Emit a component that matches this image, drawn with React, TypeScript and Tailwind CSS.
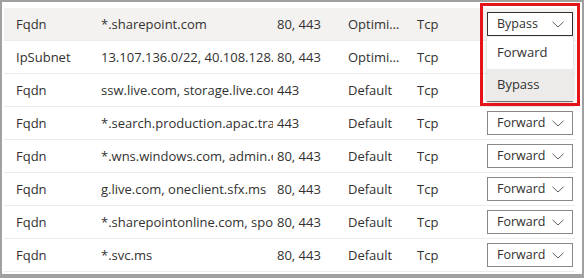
import React from "react";

const rows = [
  { type: "Fqdn", addr: "*.sharepoint.com", ports: "80, 443", cat: "Optimized", proto: "Tcp", action: "Bypass", hover: true, open: true },
  { type: "IpSubnet", addr: "13.107.136.0/22, 40.108.128.0/17, 52.104.0.0/14", ports: "80, 443", cat: "Optimized", proto: "Tcp", action: "Bypass" },
  { type: "Fqdn", addr: "ssw.live.com, storage.live.com", ports: "443", cat: "Default", proto: "Tcp", action: "Forward" },
  { type: "Fqdn", addr: "*.search.production.apac.trafficmanager.net", ports: "443", cat: "Default", proto: "Tcp", action: "Forward" },
  { type: "Fqdn", addr: "*.wns.windows.com, admin.onedrive.com", ports: "80, 443", cat: "Default", proto: "Tcp", action: "Forward" },
  { type: "Fqdn", addr: "g.live.com, oneclient.sfx.ms", ports: "80, 443", cat: "Default", proto: "Tcp", action: "Forward" },
  { type: "Fqdn", addr: "*.sharepointonline.com, spoprod-a.akamaihd.net", ports: "80, 443", cat: "Default", proto: "Tcp", action: "Forward" },
  { type: "Fqdn", addr: "*.svc.ms", ports: "80, 443", cat: "Default", proto: "Tcp", action: "Forward" },
];

function Chevron() {
  return (
    <svg width="12" height="7" viewBox="0 0 12 7" fill="none">
      <path d="M0.5 0.8 L6 6 L11.5 0.8" stroke="#605e5c" strokeWidth="1" />
    </svg>
  );
}

export default function App() {
  return (
    <div
      className="relative w-[584px] h-[278px] bg-[#a0a0a0] pt-[2px] pb-[4px] px-[2px]"
      style={{ fontFamily: '"Open Sans", "Noto Sans", sans-serif' }}
    >
      <div className="h-[272px] bg-white pt-[6px] pl-[2px] pr-[7px] text-[#323130] text-[13px]">
        {rows.map((r, i) => (
          <div
            key={i}
            className={`flex items-center h-[33px] border-b border-[#edebe9] ${r.hover ? "bg-[#f3f2f1]" : "bg-white"}`}
          >
            <div className="w-[97px] pl-[12px] pt-[2px]">{r.type}</div>
            <div className="w-[172px] overflow-hidden whitespace-nowrap pt-[2px]">{r.addr}</div>
            <div className="w-[71px] ml-[4px] pt-[2px]">{r.ports}</div>
            <div className="w-[69px] pr-[14px] pt-[2px]">
              <div className="truncate">{r.cat}</div>
            </div>
            <div className="w-[70px] pt-[2px]">{r.proto}</div>
            <div className="relative">
              <div
                className={`flex items-center justify-between w-[86px] h-[24px] pl-[9px] pr-[8px] bg-white border ${r.open ? "border-[#323130]" : "border-[#8a8886]"}`}
              >
                <span className="text-[12.5px]">{r.action}</span>
                <Chevron />
              </div>
              {r.open && (
                <div className="absolute z-10 left-0 top-[25px] w-[86px] bg-white shadow-[0_3px_7px_rgba(0,0,0,0.13),0_1px_2px_rgba(0,0,0,0.11)]">
                  <div className="h-[32px] flex items-center pl-[10px]">Forward</div>
                  <div className="h-[32px] flex items-center pl-[10px] bg-[#edebe9]">Bypass</div>
                </div>
              )}
            </div>
          </div>
        ))}
      </div>
      <div className="absolute left-[480px] top-[3px] w-[100px] h-[103px] border-[3px] border-[#e5141b] z-20" />
    </div>
  );
}
